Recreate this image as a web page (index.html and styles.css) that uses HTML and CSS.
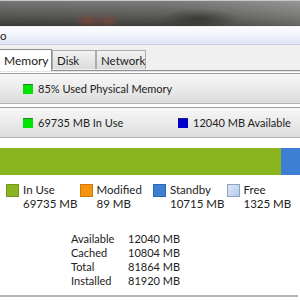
FILE: index.html
```html
<!DOCTYPE html>
<html lang="en">
<head>
  <meta charset="UTF-8" />
  <title>Resource Monitor - Memory</title>
  <link rel="stylesheet" href="styles.css">
</head>
<body>
  <div class="titlebar"></div>

  <div class="menubar"><span class="menu-item">o</span></div>

  <div class="tabs">
    <div class="tab active">Memory</div>
    <div class="tab tab-disk">Disk</div>
    <div class="tab tab-net">Network</div>
  </div>

  <div class="panel">
    <div class="section-bar">
      <span class="chip chip-green"></span>
      <span>85% Used Physical Memory</span>
    </div>

    <div class="section-bar">
      <span class="chip chip-green"></span>
      <span class="bar-text">69735 MB In Use</span>
      <span class="chip chip-blue"></span>
      <span>12040 MB Available</span>
    </div>

    <div class="usage">
      <div class="usage-inuse"></div>
      <div class="usage-standby"></div>
    </div>

    <div class="legend">
      <div class="legend-item">
        <span class="swatch sw-inuse"></span>
        <div>In Use<br>69735 MB</div>
      </div>
      <div class="legend-item">
        <span class="swatch sw-modified"></span>
        <div>Modified<br>89 MB</div>
      </div>
      <div class="legend-item">
        <span class="swatch sw-standby"></span>
        <div>Standby<br>10715 MB</div>
      </div>
      <div class="legend-item">
        <span class="swatch sw-free"></span>
        <div>Free<br>1325 MB</div>
      </div>
    </div>

    <div class="stats">
      <span>Available</span><span>12040 MB</span>
      <span>Cached</span><span>10804 MB</span>
      <span>Total</span><span>81864 MB</span>
      <span>Installed</span><span>81920 MB</span>
    </div>
  </div>
</body>
</html>
```

FILE: styles.css
```css
body {
  margin: 0;
  width: 300px;
  height: 300px;
  overflow: hidden;
  background: #fff;
  font-family: Lato, 'Open Sans', sans-serif;
  font-size: 11px;
  color: #222;
}

.titlebar {
  height: 25px;
  border-top: 1px solid #c8c8c8;
  border-bottom: 1px solid #f4f4f4;
  background:
    radial-gradient(ellipse 14px 8px at 88px 20px, rgba(150, 70, 50, 0.55), transparent),
    radial-gradient(ellipse 14px 8px at 108px 20px, rgba(150, 70, 50, 0.5), transparent),
    radial-gradient(ellipse 40px 10px at 200px 18px, rgba(40, 40, 30, 0.6), transparent),
    linear-gradient(90deg, rgba(0,0,0,0.05) 0%, rgba(0,0,0,0) 60%, rgba(255,255,255,0.2) 100%),
    linear-gradient(180deg, #7d7d7d 0%, #5a5a58 60%, #3c3c3a 100%);
}

.menubar {
  height: 17px;
  background: linear-gradient(180deg, #fbfcfe 0%, #f1f4fb 50%, #dde4f3 100%);
  border-bottom: 1px solid #c9ced9;
  line-height: 18px;
  font-size: 11.5px;
}

.tabs {
  display: flex;
  align-items: flex-end;
  height: 25px;
  background: #f0f0f0;
  border-bottom: 1px solid #8e9097;
  font-size: 11.5px;
}

.tab {
  height: 18px;
  line-height: 19px;
  margin-bottom: 1px;
  border: 1px solid #acacac;
  border-bottom: none;
  background: linear-gradient(180deg, #f3f3f3 0%, #e6e6e6 50%, #dcdcdc 100%);
}

.tab.active {
  height: 21px;
  line-height: 22px;
  margin-bottom: -1px;
  margin-left: -1px;
  width: 47px;
  padding-left: 4px;
  background: #fff;
  border-color: #898c95;
  font-size: 12px;
  position: relative;
  z-index: 1;
}

.tab-disk {
  width: 38px;
  padding-left: 4px;
}

.tab-net {
  width: 44px;
  padding-left: 4px;
}

.panel {
  border-top: 1px solid #e6e6e6;
  padding-top: 1px;
}

.section-bar {
  display: flex;
  align-items: center;
  height: 29px;
  margin-bottom: 3px;
  padding-left: 23px;
  border-top: 1px solid #9d9d9d;
  border-bottom: 1px solid #b4b4b4;
  background: linear-gradient(180deg, #f7f7f7 0%, #ececec 45%, #dcdcdc 100%);
}

.bar-text {
  width: 140px;
}

.chip {
  width: 10px;
  height: 10px;
  margin-right: 5px;
  box-sizing: border-box;
}

.chip-green {
  background: #00e400;
  border-top: 1px solid #2e7d2e;
}

.chip-blue {
  background: #0000c8;
  border-top: 1px solid #202080;
}

.usage {
  display: flex;
  height: 27px;
  margin-top: 10px;
}

.usage-inuse {
  width: 281px;
  background: #8ab51e;
}

.usage-standby {
  flex: 1;
  background: #3d7fd2;
}

.legend {
  display: flex;
  padding: 8px 0 0 6px;
  line-height: 14px;
  font-size: 11.5px;
}

.legend-item {
  display: flex;
  width: 80px;
  gap: 4px;
  white-space: nowrap;
}

.swatch {
  width: 11px;
  height: 11px;
  margin-top: 1px;
  flex: none;
}

.sw-inuse {
  background: #8ab51e;
  border: 1px solid #74991a;
}

.sw-modified {
  background: #f5940f;
  border: 1px solid #d07a0a;
}

.sw-standby {
  background: #3d7fd2;
  border: 1px solid #2e67b0;
}

.sw-free {
  background: linear-gradient(135deg, #dbe6f5, #b7cce9);
  border: 1px solid #8aa3c6;
}

.stats {
  display: grid;
  grid-template-columns: 57px auto;
  margin-top: 21px;
  padding: 0 0 7px 71px;
  width: 298px;
  box-sizing: border-box;
  line-height: 14px;
  border-bottom: 2px solid #b4b4b4;
}
```
